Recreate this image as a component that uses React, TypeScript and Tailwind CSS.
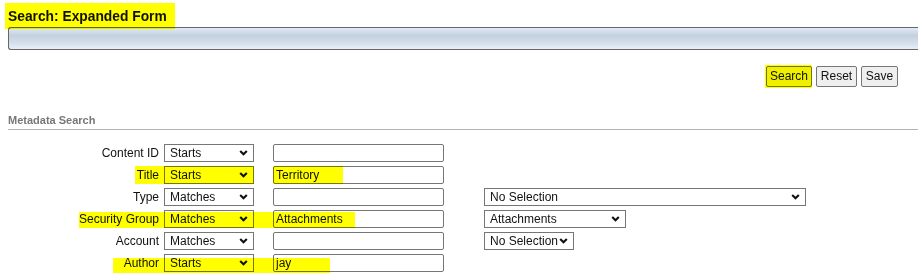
import React from "react";

const Chevron = () => (
  <svg
    className="pointer-events-none absolute right-[5px] top-1/2 -translate-y-1/2"
    width="9"
    height="7"
    viewBox="0 0 9 7"
  >
    <path d="M1.2 1.5 L4.5 4.8 L7.8 1.5" fill="none" stroke="#111" strokeWidth="2.1" />
  </svg>
);

function Dropdown({ value, width }: { value: string; width: string }) {
  return (
    <div className={`relative h-[18px] shrink-0 border border-[#767676] bg-white ${width}`}>
      <select
        defaultValue={value}
        className="block h-[16px] w-full appearance-none bg-transparent py-0 pl-[5px] text-[12px] leading-[16px] text-[#111] outline-none"
      >
        <option>{value}</option>
      </select>
      <Chevron />
    </div>
  );
}

const rows = [
  { label: "Content ID", op: "Starts", text: "", extra: null },
  { label: "Title", op: "Starts", text: "Territory", extra: null },
  { label: "Type", op: "Matches", text: "", extra: { value: "No Selection", width: "w-[322px]" } },
  { label: "Security Group", op: "Matches", text: "Attachments", extra: { value: "Attachments", width: "w-[142px]" } },
  { label: "Account", op: "Matches", text: "", extra: { value: "No Selection", width: "w-[90px]" } },
  { label: "Author", op: "Starts", text: "jay", extra: null },
];

const buttons = [
  { name: "Search", w: "w-[46px]" },
  { name: "Reset", w: "w-[41px]" },
  { name: "Save", w: "w-[37px]" },
];

// highlighter marks drawn over the form
const marks = [
  "left-[5px] top-[3px] w-[170px] h-[26px]",
  "left-[765px] top-[65px] w-[47px] h-[23px]",
  "left-[135px] top-[166px] w-[119px] h-[18px]",
  "left-[273px] top-[166px] w-[70px] h-[18px]",
  "left-[79px] top-[212px] w-[276px] h-[16px]",
  "left-[113px] top-[258px] w-[217px] h-[15px]",
];

export default function App() {
  return (
    <div className="relative h-[274px] w-[918px] overflow-hidden bg-white font-['Liberation_Sans',Arial,sans-serif] text-[#111]">
      <h1 className="pl-[8px] pt-[9px] text-[13.8px] font-bold leading-[16px]">Search: Expanded Form</h1>

      <div className="ml-[8px] mt-[2px] h-[23px] rounded-l-[3px] border-y border-l border-[#666] bg-[linear-gradient(to_bottom,#e2ebf6_0%,#c3d0de_35%,#d3deea_70%,#e8eff8_100%)]" />

      <div className="mt-[16px] flex justify-end gap-[4px] pr-[20px]">
        {buttons.map((b) => (
          <button
            key={b.name}
            className={`h-[21px] rounded-[2px] border border-[#767676] bg-[#efefef] px-0 text-center text-[12px] leading-[19px] text-[#111] ${b.w}`}
          >
            {b.name}
          </button>
        ))}
      </div>

      <div className="ml-[8px] mt-[27px] text-[11px] font-bold leading-[13px] text-[#777]">Metadata Search</div>
      <div className="ml-[8px] mt-[2px] h-px bg-[#b3b3ad]" />

      <div className="mt-[14px] flex flex-col gap-[4px]">
        {rows.map((r) => (
          <div key={r.label} className="flex h-[18px] items-center">
            <label className="w-[159px] shrink-0 text-right text-[12px] leading-[18px]">{r.label}</label>
            <div className="ml-[5px]">
              <Dropdown value={r.op} width="w-[90px]" />
            </div>
            <input
              defaultValue={r.text}
              className="ml-[19px] h-[18px] w-[171px] shrink-0 rounded-[2px] border border-[#767676] bg-white px-[2px] text-[12px] leading-[16px] text-[#111] outline-none"
            />
            {r.extra && (
              <div className="ml-[40px]">
                <Dropdown value={r.extra.value} width={r.extra.width} />
              </div>
            )}
          </div>
        ))}
      </div>

      {marks.map((m) => (
        <div key={m} className={`pointer-events-none absolute bg-[#ffff00] mix-blend-multiply ${m}`} />
      ))}
    </div>
  );
}
